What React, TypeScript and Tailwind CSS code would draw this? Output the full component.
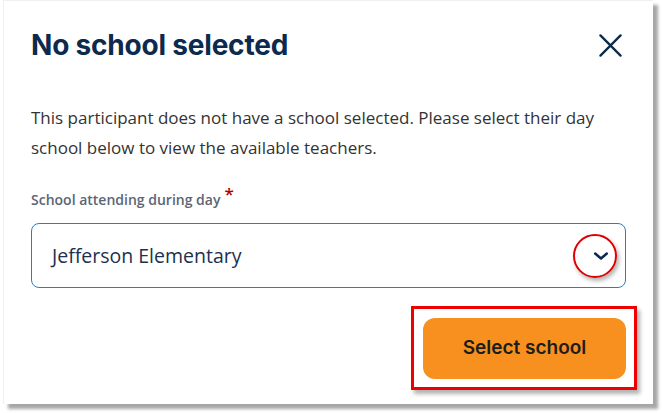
export default function App() {
  return (
    <div className="w-[662px] h-[413px] bg-white overflow-hidden">
      <div
        className="relative ml-[3px] w-[650px] h-[404px] bg-white border-l border-t border-[#f0f0f0] shadow-[5px_5px_3px_rgba(0,0,0,0.35)] px-[27px]"
        style={{ fontFamily: '"Open Sans", Lato, sans-serif' }}
      >
        {/* Header */}
        <div className="flex items-center justify-between pt-[27px]">
          <h1
            className="text-[28px] font-bold text-[#0c2a4d] tracking-[-0.2px] leading-[34px]"
            style={{ fontFamily: 'Inter, "Noto Sans", sans-serif' }}
          >
            No school selected
          </h1>
          <svg width="23" height="23" viewBox="0 0 24 24" className="mr-[4px] text-[#0c2a4d]">
            <path d="M1.5 1.5L22.5 22.5M22.5 1.5L1.5 22.5" stroke="currentColor" strokeWidth="2.4" strokeLinecap="round" />
          </svg>
        </div>

        {/* Body */}
        <p className="mt-[41px] text-[17px] leading-[30px] text-[#333] w-[585px]">
          This participant does not have a school selected. Please select their day school below to view the available teachers.
        </p>

        <label className="block mt-[26px] text-[14px] font-semibold text-[#5b6577] leading-[20px]">
          School attending during day
          <span className="text-[#b00000] text-[17px] ml-[4px] relative -top-[5px]">*</span>
        </label>

        <div className="mt-[13px] relative flex items-center justify-between w-[595px] h-[65px] border border-[#2b7bd0] rounded-[8px] pl-[20px] pr-[14px]">
          <span className="text-[19.5px] text-[#1c3150]">Jefferson Elementary</span>
          <svg width="20" height="20" viewBox="0 0 24 24" className="text-[#0c2a4d]">
            <path d="M5 9l7 6 7-6" fill="none" stroke="currentColor" strokeWidth="3" strokeLinecap="round" strokeLinejoin="round" />
          </svg>
          {/* annotation circle */}
          <div className="absolute right-[8px] top-[10px] w-[44px] h-[44px] rounded-full border-2 border-[#e00000] shadow-[2px_3px_4px_rgba(0,0,0,0.3)]" />
        </div>

        <div className="flex justify-end mt-[30px] w-[595px]">
          <div className="relative">
            <button
              className="w-[203px] h-[61px] rounded-[12px] bg-[#f7901e] text-[19px] font-semibold text-[#1d1d1d]"
              style={{ fontFamily: 'Inter, "Noto Sans", sans-serif' }}
            >
              Select school
            </button>
            {/* annotation rectangle */}
            <div className="absolute -left-[12px] -top-[12px] w-[226px] h-[84px] border-[3px] border-[#ee0000] shadow-[3px_4px_4px_rgba(0,0,0,0.3)]" />
          </div>
        </div>
      </div>
    </div>
  );
}
